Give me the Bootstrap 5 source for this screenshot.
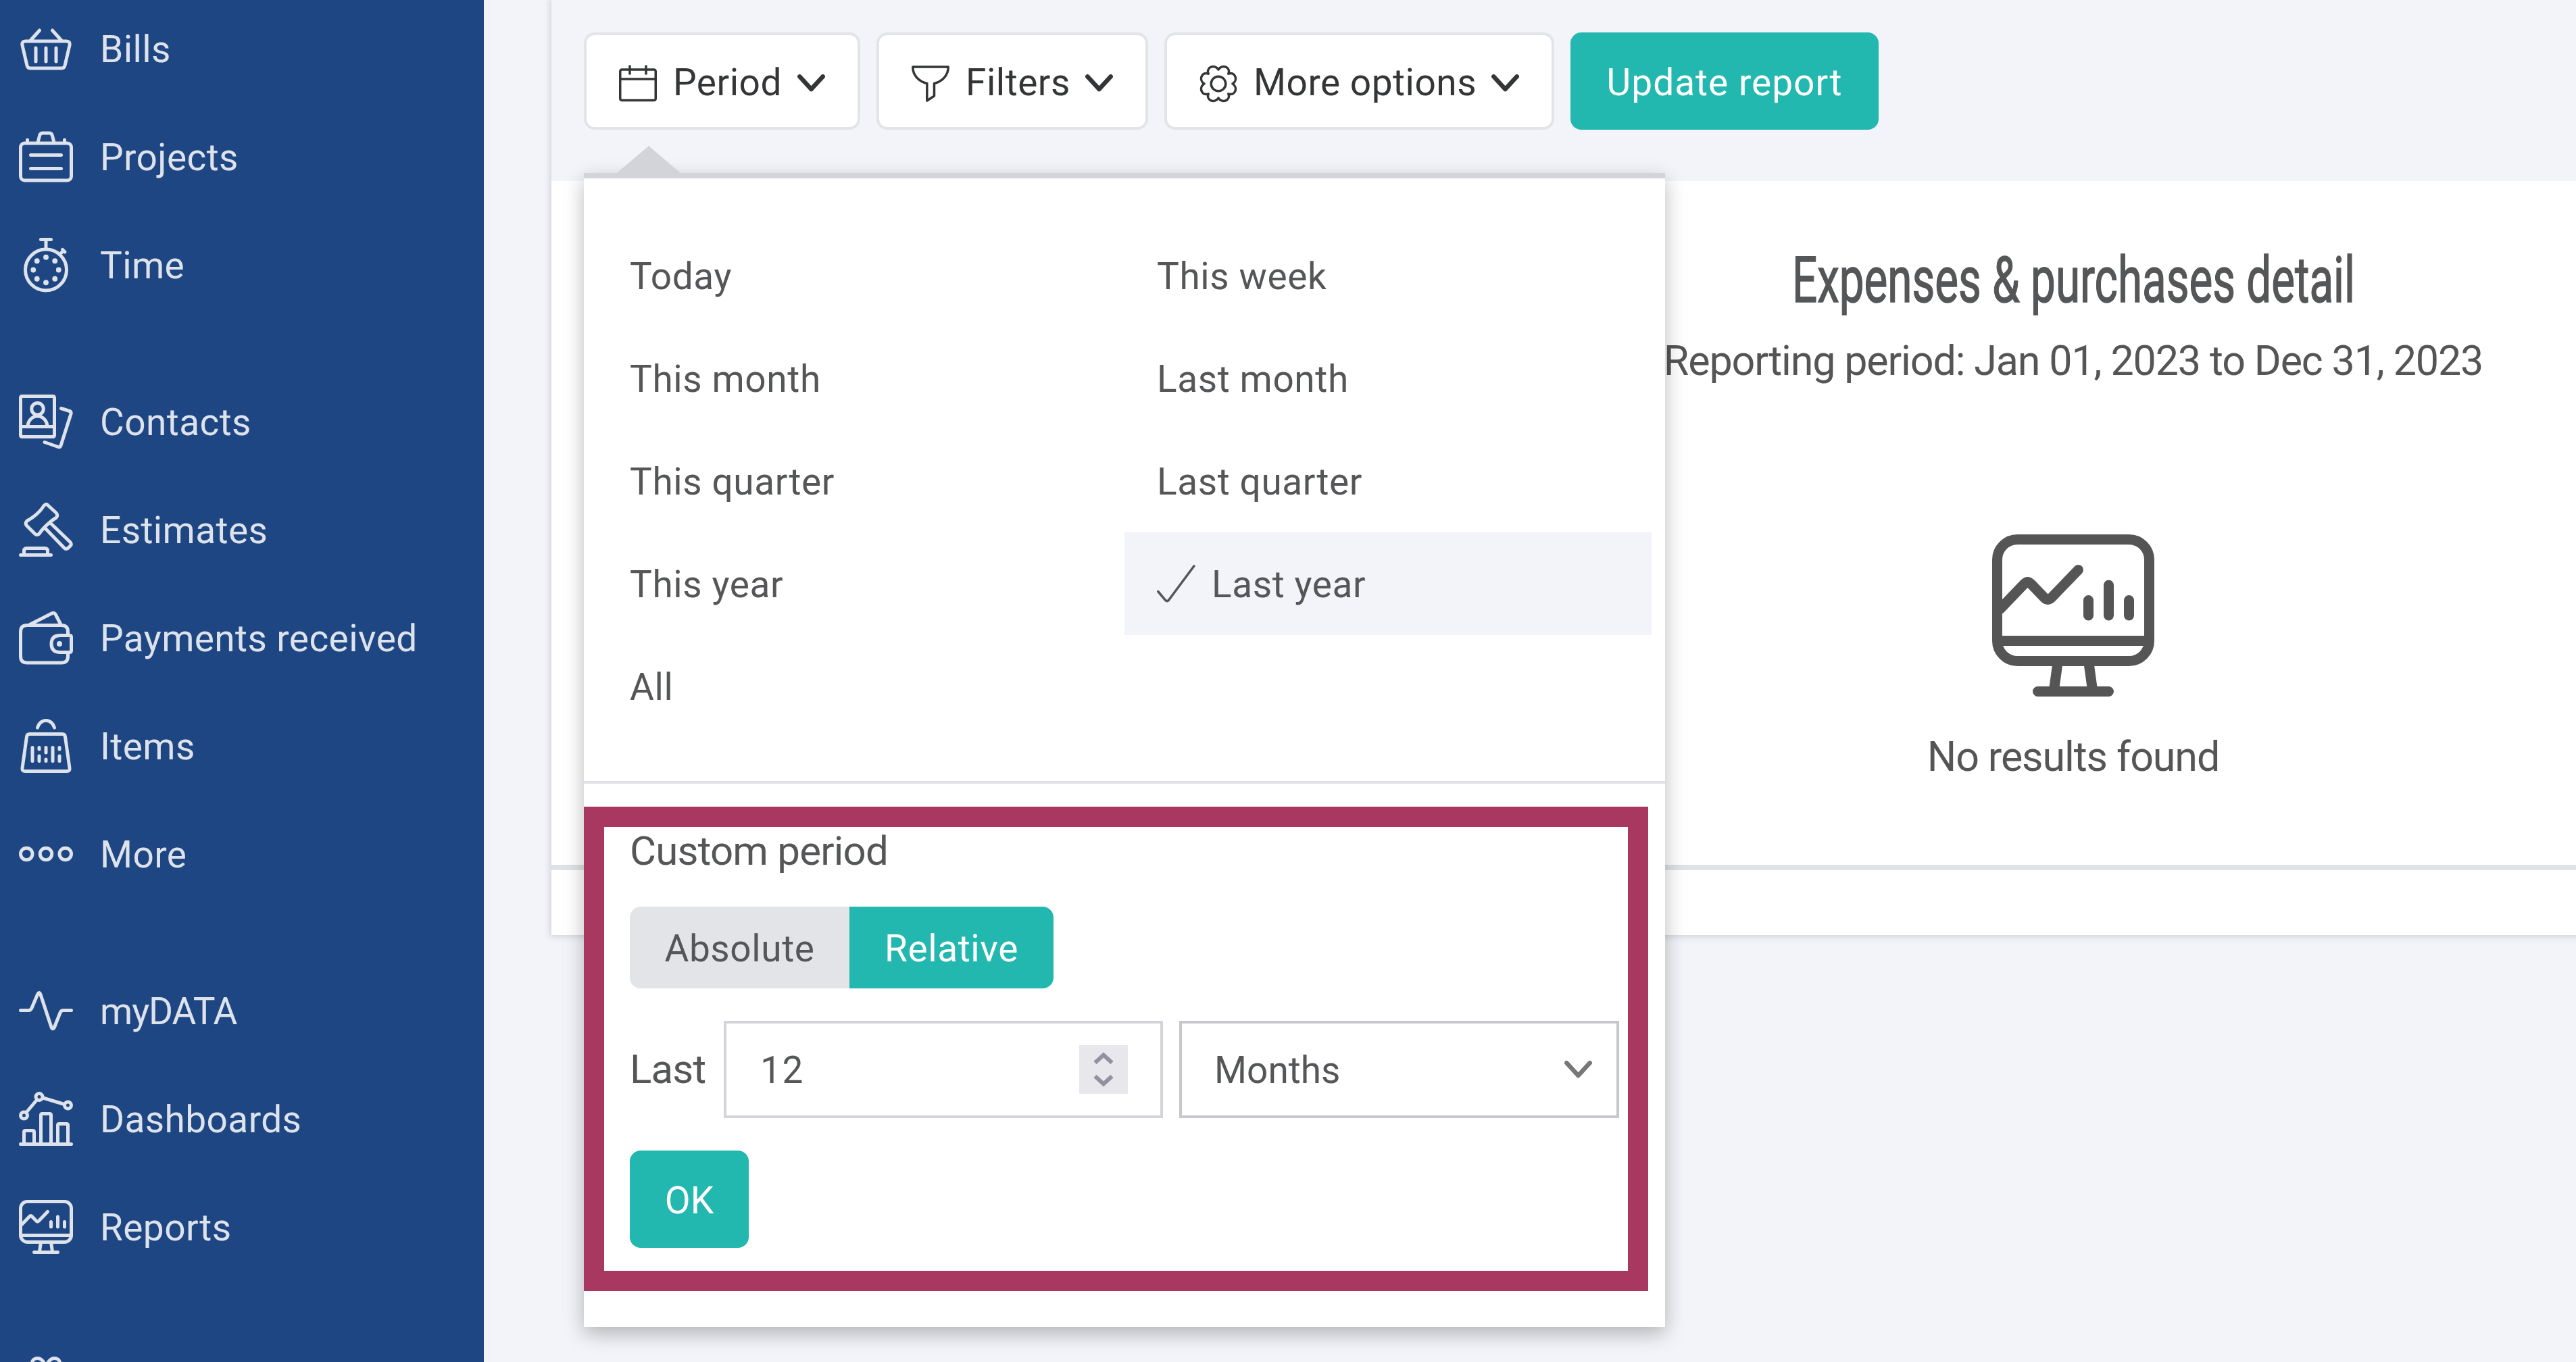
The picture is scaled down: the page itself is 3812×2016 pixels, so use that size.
<!DOCTYPE html>
<html lang="en">
<head>
    <meta charset="UTF-8">
    <meta name="viewport" content="width=device-width, initial-scale=1.0">
    <title>Expenses &amp; purchases detail</title>
    <link href="https://cdn.jsdelivr.net/npm/bootstrap@5.3.0/dist/css/bootstrap.min.css" rel="stylesheet">
    <style>
        body {
            background-color: #f3f4f9;
            color: #555657;
            font-family: Roboto, 'Liberation Sans', sans-serif;
            font-size: 55px;
            line-height: 80px;
            letter-spacing: 0.6px;
            height: 2016px;
            overflow: hidden;
        }
        svg { flex: none; overflow: visible; fill: none; stroke: currentColor; stroke-linecap: round; stroke-linejoin: round; }
        .label-text { padding-top: 2px; white-space: nowrap; }

        /* Sidebar */
        .sidebar { width: 716px; height: 2016px; flex: none; background: #1e4683; padding: 32px 0 0 28px; gap: 152px; overflow: hidden; letter-spacing: 0.4px; }
        .side-group { gap: 80px; }
        .side-link { height: 80px; gap: 40px; color: #dde2eb; text-decoration: none; }
        .side-link svg { width: 80px; height: 80px; }
        .tight { letter-spacing: -1.1px; }

        /* Report panel, wider than the window */
        .main { padding-left: 100px; overflow: hidden; height: 2016px; }
        .panel { width: 4504px; height: 1384px; background: #fff; box-shadow: 0 0 10px 2px rgba(0, 0, 0, 0.15); }
        .toolbar { height: 268px; padding: 48px; gap: 24px; background: #f3f4f9; }
        .tool-btn { height: 144px; border: 4px solid #e2e4e8; border-radius: 16px; background: #fff; color: #333536; padding: 0 48px; letter-spacing: 0.5px; }
        .tool-btn .label-text { margin-left: 24px; padding-top: 3px; }
        .tool-icon { width: 56px; height: 56px; stroke-width: 3.5; }
        .caret { width: 41px; height: 26px; stroke-width: 6.5; }
        .w-period { width: 409px; }
        .w-filters { width: 402px; }
        .w-options { width: 577px; }
        .teal-btn { height: 144px; border: 0; border-radius: 16px; background: #22b7af; color: #fff; padding: 3px 0 0; }
        .w-update { width: 456px; letter-spacing: 1px; }
        .report { height: 1012px; padding-top: 99px; }
        .report-title { font-size: 94px; font-weight: 400; line-height: 96px; letter-spacing: 0; margin: 0; transform: scaleX(0.697); -webkit-text-stroke: 1.5px currentColor; white-space: nowrap; }
        .report-sub { font-size: 61px; letter-spacing: -1.15px; margin-top: 31px; color: #555; white-space: nowrap; }
        .empty-icon { width: 240px; height: 240px; margin: 217px 0 49px; color: #555; }
        .empty-text { font-size: 61px; letter-spacing: -1.1px; color: #555; }
        .panel-foot { height: 104px; border-top: 8px solid #e1e2e7; }

        /* Period menu */
        .period-menu { position: absolute; left: 48px; top: 256px; width: 1600px; height: 1708px; z-index: 10; background: #fff; border-top: 8px solid #d3d4d9; box-shadow: 0 10px 28px rgba(0, 0, 0, 0.27); }
        .period-menu::before { content: ''; position: absolute; left: 49px; top: -48px; border: 47px solid transparent; border-top: 0; border-bottom: 40px solid #d3d4d9; }
        .presets { padding: 68px 20px 64px; display: grid; grid-template-columns: 780px 780px; grid-auto-rows: 152px; border-bottom: 4px solid #e1e2e7; }
        .preset { padding-left: 48px; gap: 24px; }
        .preset.chosen { background: #f3f4f9; }
        .check-icon { width: 57px; height: 56px; stroke-width: 3.5; }
        .custom { padding: 60px 68px 0; }
        .custom-label { font-size: 60px; letter-spacing: -0.8px; }
        .switcher { margin: 42px 0 48px; height: 121px; width: 627px; border-radius: 16px; overflow: hidden; }
        .switcher .off { width: 325px; background: #e2e4e8; }
        .switcher .on { width: 302px; background: #22b7af; color: #fff; }
        .field { height: 144px; border: 4px solid #d3d4d9; background: #fff; }
        .field input, .field select { border: 0; outline: 0; background: none; appearance: none; min-width: 0; color: inherit; font: inherit; letter-spacing: inherit; padding: 2px 0 0; }
        .field-count { width: 650px; padding: 0 48px 0 50px; letter-spacing: 1.5px; }
        .field-unit { width: 651px; margin-left: 24px; padding: 0 36px 0 48px; border-color: #c7c8cc; letter-spacing: 0; }
        .field-unit .caret { color: #777; }
        .last-label { width: 139px; }
        .stepper { width: 72px; height: 72px; flex: none; background: #e8e8ec; color: #9291a0; }
        .stepper svg { width: 72px; height: 72px; stroke-width: 6; stroke-linecap: butt; stroke-linejoin: miter; }
        .ok-btn { width: 176px; margin-top: 48px; }
        .highlight { position: absolute; left: 0; top: 930px; width: 1575px; height: 717px; border: 30px solid #a93861; pointer-events: none; }
    </style>
</head>
<body>
    <svg class="d-none">
        <symbol id="monitor" viewBox="0 0 16 16">
            <rect x=".5" y=".5" width="15" height="12" rx="2"/>
            <path d="M.8 10.5H15.2M.8 7.35L3.15 4.9Q3.5 4.5 3.85 4.9L5.15 6.25Q5.5 6.6 5.85 6.25L8.5 3.5M9.5 6.5V8M11.5 5V8M13.5 6.5V8M6.45 12.8L6.12 15.2M9.55 12.8L9.88 15.2M4.5 15.5H11.5"/>
        </symbol>
        <symbol id="caret" viewBox="0 0 41 26"><path d="M3.3 3.3L20.5 22L37.7 3.3"/></symbol>
    </svg>

    <div class="d-flex">
        <nav class="sidebar d-flex flex-column">
            <div class="side-group d-flex flex-column">
                <a class="side-link d-flex align-items-center">
                    <svg viewBox="0 0 16 16"><path d="M1.9 5.8H14.1Q15.2 5.8 15 7L13.6 13Q13.4 13.8 12.7 13.8H3.3Q2.6 13.8 2.4 13L1 7Q.8 5.8 1.9 5.8ZM6.1 2.6L3.4 5.6M9.9 2.6L12.6 5.6M5 7.8V11.8M8 7.8V11.8M11 7.8V11.8"/></svg>
                    <span class="label-text">Bills</span>
                </a>
                <a class="side-link d-flex align-items-center">
                    <svg viewBox="0 0 16 16"><rect x=".5" y="4" width="15" height="11" rx="1.2"/><path d="M5.6 3.8L6.1 1.8Q6.3 1 7 1H9Q9.7 1 9.9 1.8L10.4 3.8M2.5 3V3.8M13.5 3V3.8M3.5 7.5H12.5M3.5 11.5H12.5"/></svg>
                    <span class="label-text">Projects</span>
                </a>
                <a class="side-link d-flex align-items-center">
                    <svg viewBox="0 0 16 16"><circle cx="8" cy="9.5" r="6.1"/><path d="M6.5.5H9.5M8 .8V3.2M12.2 4.8L13.1 3.9M12.9 3.5L13.6 4.2"/><g fill="currentColor" stroke="none"><circle cx="8" cy="5.75" r=".78"/><circle cx="8" cy="13.25" r=".78"/><circle cx="4.25" cy="9.5" r=".78"/><circle cx="11.75" cy="9.5" r=".78"/><circle cx="5.35" cy="6.85" r=".78"/><circle cx="10.65" cy="6.85" r=".78"/><circle cx="5.35" cy="12.15" r=".78"/><circle cx="10.65" cy="12.15" r=".78"/></g></svg>
                    <span class="label-text">Time</span>
                </a>
            </div>
            <div class="side-group d-flex flex-column">
                <a class="side-link d-flex align-items-center">
                    <svg viewBox="0 0 16 16"><rect x=".5" y=".5" width="10" height="12" rx=".4"/><circle cx="5.5" cy="4.25" r="1.75"/><path d="M.8 9.5H10.2M2.6 9.3C2.8 7.6 4 6.4 5.5 6.4S8.2 7.6 8.4 9.3M12.5 4.1L15 4.9Q15.6 5.1 15.4 5.7L12.4 15.1Q12.2 15.7 11.6 15.5L7.6 14.1"/></svg>
                    <span class="label-text">Contacts</span>
                </a>
                <a class="side-link d-flex align-items-center">
                    <svg viewBox="0 0 16 16"><path d="M7.4.9Q8 .1 8.6.8L11.1 3.1Q11.6 3.8 11.1 4.4C9.4 5.4 7 7.6 6.1 9.1Q5.4 9.9 4.7 9.2L2.3 6.8Q1.7 6.1 2.4 5.4C4.4 4.3 6.2 2.8 7.4.9ZM9.3 6L15.2 11.7Q15.7 12.3 15.2 12.8L14.5 13.5Q13.9 13.9 13.4 13.4L7.7 7.5M.5 15.5H9.5M1.5 15.2V14.3Q1.5 13.5 2.3 13.5H7.7Q8.5 13.5 8.5 14.3V15.2"/></svg>
                    <span class="label-text">Estimates</span>
                </a>
                <a class="side-link d-flex align-items-center">
                    <svg viewBox="0 0 16 16"><path d="M14.5 7V6.2Q14.5 4.3 12.6 4.3H2.4Q.5 4.3 .5 6.2V13.5Q.5 15.4 2.4 15.4H12.6Q14.5 15.4 14.5 13.5V12.6M15 7.3H12.2Q9.6 7.3 9.6 9.8T12.2 12.3H15Q15.5 12.3 15.5 11.8V7.8Q15.5 7.3 15 7.3M3.2 4.1L9.7.8Q10.6.4 10.9 1.2L12.4 4.1"/><circle cx="12" cy="9.8" r=".8" fill="currentColor" stroke="none"/></svg>
                    <span class="label-text">Payments received</span>
                </a>
                <a class="side-link d-flex align-items-center">
                    <svg viewBox="0 0 16 16"><path d="M5.5 2.6C5.8 1.4 6.8.5 8 .5S10.2 1.4 10.5 2.6M3.2 4.5H12.8Q13.6 4.5 13.7 5.3L15 14.6Q15.1 15.5 14.2 15.5H1.8Q.9 15.5 1 14.6L2.3 5.3Q2.4 4.5 3.2 4.5ZM4 8.5V12.5M6 8.5V9M6 11V12.5M8 8.5V10M8 12V12.5M10 8.5V12.5M12 8.5V9M12 11V12.5"/></svg>
                    <span class="label-text">Items</span>
                </a>
                <a class="side-link d-flex align-items-center">
                    <svg viewBox="0 0 16 16"><circle cx="2.25" cy="8" r="1.75"/><circle cx="8" cy="8" r="1.75"/><circle cx="13.75" cy="8" r="1.75"/></svg>
                    <span class="label-text">More</span>
                </a>
            </div>
            <div class="side-group d-flex flex-column">
                <a class="side-link d-flex align-items-center">
                    <svg viewBox="0 0 16 16"><path d="M.5 7.9H2.9Q3.5 7.9 3.8 7.2L5.5 3.2Q6 2.2 6.4 3.2L9.6 12.9Q10 13.8 10.5 12.9L12.2 8.6Q12.5 7.9 13.1 7.9H15.5"/></svg>
                    <span class="label-text tight">myDATA</span>
                </a>
                <a class="side-link d-flex align-items-center">
                    <svg viewBox="0 0 16 16"><circle cx="1.5" cy="7" r="1"/><circle cx="6" cy="1.5" r="1"/><circle cx="14.5" cy="4" r="1"/><path d="M2.2 6.1L5.3 2.4M7.1 1.8L13.4 3.7M.5 15.5H15.5M1.5 15.3V11.9Q1.5 11.5 1.9 11.5H4.1Q4.5 11.5 4.5 11.9V15.3M6.5 15.3V6.9Q6.5 6.5 6.9 6.5H9.1Q9.5 6.5 9.5 6.9V15.3M11.5 15.3V9.9Q11.5 9.5 11.9 9.5H14.1Q14.5 9.5 14.5 9.9V15.3"/></svg>
                    <span class="label-text">Dashboards</span>
                </a>
                <a class="side-link d-flex align-items-center">
                    <svg><use href="#monitor"/></svg>
                    <span class="label-text">Reports</span>
                </a>
            </div>
            <div class="side-group d-flex flex-column">
                <a class="side-link d-flex align-items-center">
                    <svg viewBox="0 0 16 16"><path d="M8 4C7.8 1.8 6.8.5 5.5.5S3.6 1.6 4 2.6 6.2 4 8 4C9.8 4 11.6 3.6 12 2.6S11.8.5 10.5.5 8.2 1.8 8 4M.5 4.5H15.5V8H.5ZM1.5 8V15.5H14.5V8M8 4.5V15.5"/></svg>
                </a>
            </div>
        </nav>

        <main class="main flex-grow-1">
            <div class="panel position-relative">
                <div class="toolbar d-flex">
                    <button class="tool-btn w-period d-flex align-items-center">
                        <svg class="tool-icon" viewBox="0 0 56 56"><rect x="1.75" y="11" width="52.5" height="45.5" rx="2.5"/><path stroke-linecap="butt" d="M2 25H54M16 4.5V18.5M40 4.5V18.5"/></svg>
                        <span class="label-text">Period</span>
                        <svg class="caret ms-auto"><use href="#caret" y="3"/></svg>
                    </button>
                    <button class="tool-btn w-filters d-flex align-items-center">
                        <svg class="tool-icon" viewBox="0 0 56 56"><path d="M1.75 7H54.25C54.25 19 46 28.5 33.5 31.5V50L22.8 57V31.5C10 28.5 1.75 19 1.75 7Z"/></svg>
                        <span class="label-text">Filters</span>
                        <svg class="caret ms-auto"><use href="#caret" y="3"/></svg>
                    </button>
                    <button class="tool-btn w-options d-flex align-items-center">
                        <svg class="tool-icon" viewBox="0 0 56 56"><g transform="translate(0 4)"><circle cx="28" cy="28" r="10.8"/><path d="M49 28C57.7 33.5 52.6 46.6 42.8 42.8C46.6 52.6 33.5 57.7 28 49C22.5 57.7 9.4 52.6 13.2 42.8C3.4 46.6 -1.7 33.5 7 28C-1.7 22.5 3.4 9.4 13.2 13.2C9.4 3.4 22.5 -1.7 28 7C33.5 -1.7 46.6 3.4 42.8 13.2C52.6 9.4 57.7 22.5 49 28Z"/></g></svg>
                        <span class="label-text">More options</span>
                        <svg class="caret ms-auto"><use href="#caret" y="3"/></svg>
                    </button>
                    <button class="teal-btn w-update"><span class="label-text">Update report</span></button>
                </div>

                <div class="report d-flex flex-column align-items-center">
                    <h1 class="report-title">Expenses &amp; purchases detail</h1>
                    <div class="report-sub">Reporting period: Jan 01, 2023 to Dec 31, 2023</div>
                    <svg class="empty-icon"><use href="#monitor"/></svg>
                    <div class="empty-text">No results found</div>
                </div>
                <div class="panel-foot"></div>

                <div class="period-menu">
                    <div class="presets">
                        <div class="preset d-flex align-items-center"><span class="label-text">Today</span></div>
                        <div class="preset d-flex align-items-center"><span class="label-text">This week</span></div>
                        <div class="preset d-flex align-items-center"><span class="label-text">This month</span></div>
                        <div class="preset d-flex align-items-center"><span class="label-text">Last month</span></div>
                        <div class="preset d-flex align-items-center"><span class="label-text">This quarter</span></div>
                        <div class="preset d-flex align-items-center"><span class="label-text">Last quarter</span></div>
                        <div class="preset d-flex align-items-center"><span class="label-text">This year</span></div>
                        <div class="preset chosen d-flex align-items-center">
                            <svg class="check-icon" viewBox="0 0 57 56"><path d="M1.75 39.5L12.5 52.3Q15 55 17.5 52.3L55 1.75"/></svg>
                            <span class="label-text">Last year</span>
                        </div>
                        <div class="preset d-flex align-items-center"><span class="label-text">All</span></div>
                    </div>
                    <div class="custom">
                        <div class="custom-label">Custom period</div>
                        <div class="switcher d-flex">
                            <div class="off d-flex align-items-center justify-content-center"><span class="label-text">Absolute</span></div>
                            <div class="on d-flex align-items-center justify-content-center"><span class="label-text">Relative</span></div>
                        </div>
                        <div class="d-flex align-items-center">
                            <div class="custom-label last-label">Last</div>
                            <div class="field field-count d-flex align-items-center">
                                <input class="flex-grow-1" type="text" value="12">
                                <div class="stepper"><svg class="d-block" viewBox="0 0 72 72"><path d="M23.5 26L36 14.5L48.5 26M23.5 46L36 57.5L48.5 46"/></svg></div>
                            </div>
                            <div class="field field-unit d-flex align-items-center">
                                <select class="flex-grow-1"><option>Months</option></select>
                                <svg class="caret"><use href="#caret"/></svg>
                            </div>
                        </div>
                        <button class="teal-btn ok-btn"><span class="label-text">OK</span></button>
                    </div>
                    <div class="highlight"></div>
                </div>
            </div>
        </main>
    </div>
    <script src="https://cdn.jsdelivr.net/npm/bootstrap@5.3.0/dist/js/bootstrap.bundle.min.js"></script>
</body>
</html>
